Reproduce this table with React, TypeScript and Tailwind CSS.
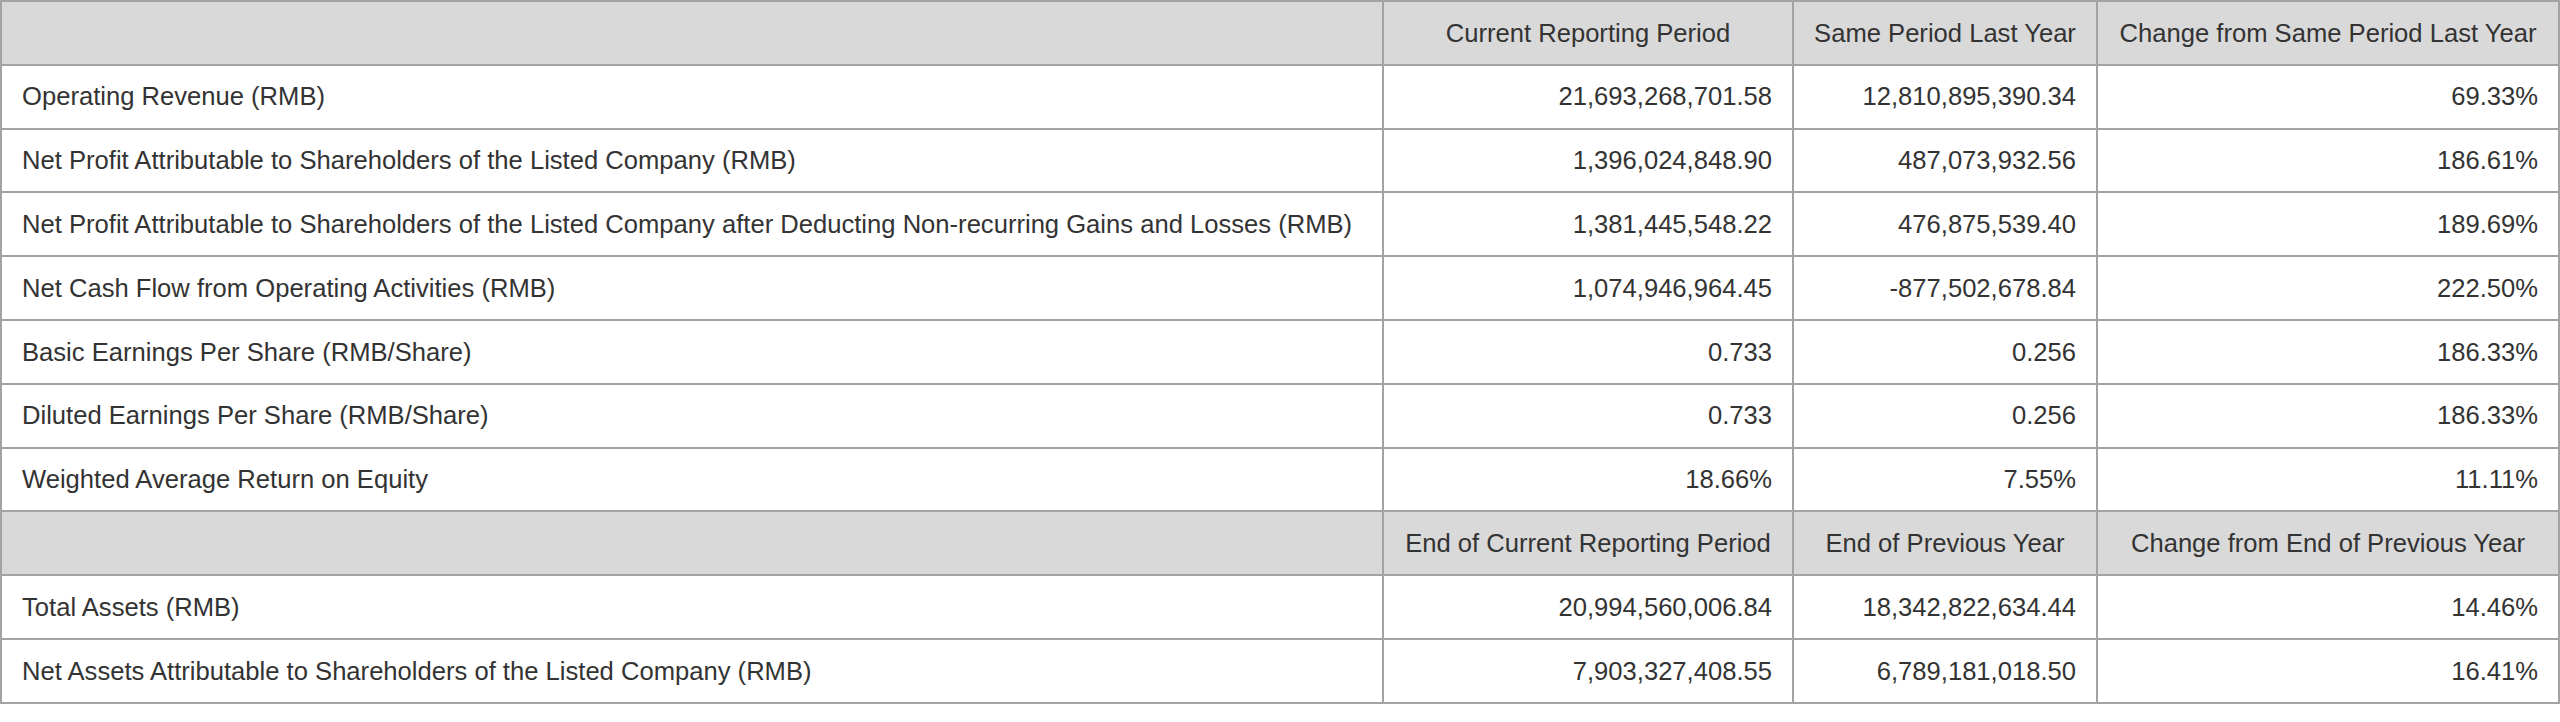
import React from 'react';

type Row = {
  label: string,
  current: string,
  previous: string,
  change: string,
};

const periodRows: Row[] = [
  { label: 'Operating Revenue (RMB)', current: '21,693,268,701.58', previous: '12,810,895,390.34', change: '69.33%' },
  { label: 'Net Profit Attributable to Shareholders of the Listed Company (RMB)', current: '1,396,024,848.90', previous: '487,073,932.56', change: '186.61%' },
  { label: 'Net Profit Attributable to Shareholders of the Listed Company after Deducting Non-recurring Gains and Losses (RMB)', current: '1,381,445,548.22', previous: '476,875,539.40', change: '189.69%' },
  { label: 'Net Cash Flow from Operating Activities (RMB)', current: '1,074,946,964.45', previous: '-877,502,678.84', change: '222.50%' },
  { label: 'Basic Earnings Per Share (RMB/Share)', current: '0.733', previous: '0.256', change: '186.33%' },
  { label: 'Diluted Earnings Per Share (RMB/Share)', current: '0.733', previous: '0.256', change: '186.33%' },
  { label: 'Weighted Average Return on Equity', current: '18.66%', previous: '7.55%', change: '11.11%' },
];

const balanceRows: Row[] = [
  { label: 'Total Assets (RMB)', current: '20,994,560,006.84', previous: '18,342,822,634.44', change: '14.46%' },
  { label: 'Net Assets Attributable to Shareholders of the Listed Company (RMB)', current: '7,903,327,408.55', previous: '6,789,181,018.50', change: '16.41%' },
];

const th = 'h-[63.8px] border-2 border-[#a3a3a3] bg-[#d9d9d9] px-[20px] text-center font-normal';
const td = 'h-[63.8px] border-2 border-[#a3a3a3] bg-white px-[20px]';

const HeaderRow = ({ cols }: { cols: string[] }) => (
  <tr>
    <th className={th}></th>
    {cols.map((c) => (
      <th key={c} className={th}>{c}</th>
    ))}
  </tr>
);

const DataRow = ({ row }: { row: Row }) => (
  <tr>
    <td className={`${td} text-left`}>{row.label}</td>
    <td className={`${td} text-right`}>{row.current}</td>
    <td className={`${td} text-right`}>{row.previous}</td>
    <td className={`${td} text-right`}>{row.change}</td>
  </tr>
);

export default function App() {
  return (
    <div className="w-[2560px] bg-white text-[#333333] text-[25.6px] leading-[1.2] font-['Liberation_Sans',Arial,sans-serif]">
      <table className="w-full border-collapse">
        <colgroup>
          <col className="w-[1382px]" />
          <col className="w-[410px]" />
          <col className="w-[304px]" />
          <col className="w-[462px]" />
        </colgroup>
        <tbody>
          <HeaderRow cols={['Current Reporting Period', 'Same Period Last Year', 'Change from Same Period Last Year']} />
          {periodRows.map((r) => <DataRow key={r.label} row={r} />)}
          <HeaderRow cols={['End of Current Reporting Period', 'End of Previous Year', 'Change from End of Previous Year']} />
          {balanceRows.map((r) => <DataRow key={r.label} row={r} />)}
        </tbody>
      </table>
    </div>
  );
}
